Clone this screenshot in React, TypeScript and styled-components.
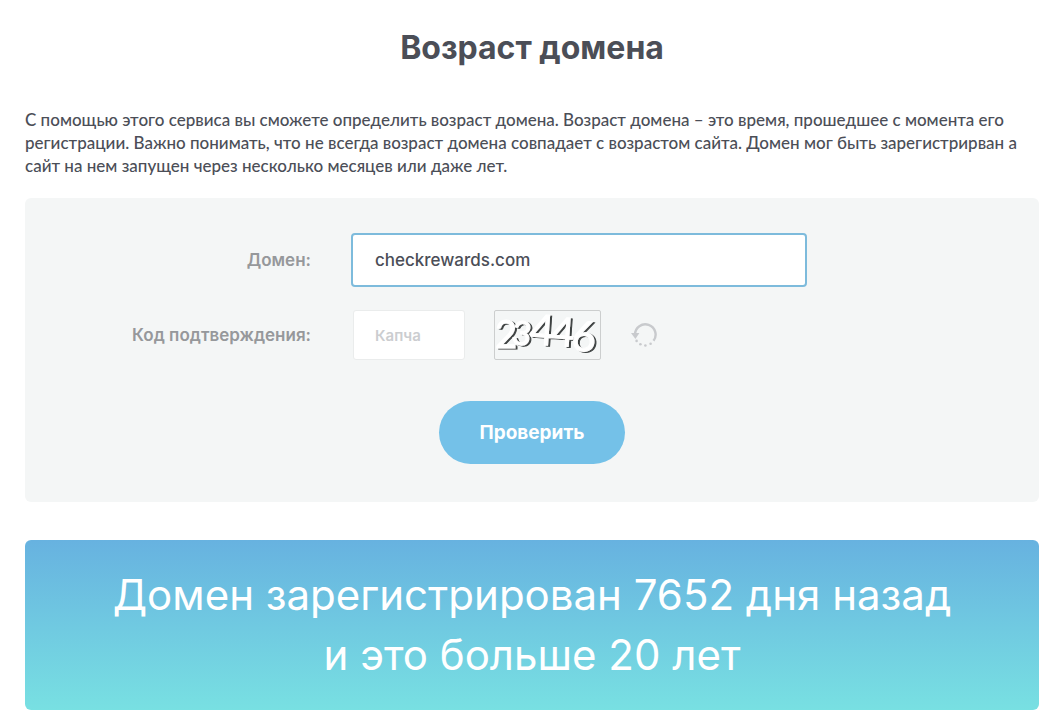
import React, { useState } from "react";
import styled, { createGlobalStyle } from "styled-components";

const Global = createGlobalStyle`
  *, *::before, *::after { box-sizing: border-box; }
  body {
    margin: 0;
    background: #fff;
    color: #4b4e57;
    font-family: Inter, "Open Sans", sans-serif;
  }
`;

const Page = styled.main`
  padding: 24px 24px 14px 25px;
`;

const Title = styled.h1`
  margin: 0 0 36px;
  text-align: center;
  font-size: 32px;
  line-height: 48px;
  font-weight: 700;
`;

const Intro = styled.p`
  margin: 0 0 21px;
  font-family: Lato, sans-serif;
  font-size: 17px;
  line-height: 23px;
  font-weight: 500;
`;

const Form = styled.form`
  display: flex;
  flex-direction: column;
  padding: 35px 0 38px;
  border-radius: 6px;
  background: #f4f6f6;
`;

const Row = styled.div`
  display: grid;
  grid-template-columns: 286px minmax(0, 456px);
  column-gap: 40px;
  align-items: center;

  & + & {
    margin-top: 23px;
  }
`;

const Label = styled.label`
  text-align: right;
  font-size: 17px;
  line-height: 24px;
  font-weight: 600;
  color: #96989b;
`;

const DomainInput = styled.input`
  width: 100%;
  height: 54px;
  padding: 0 22px;
  border: 2px solid #7dbbdc;
  border-radius: 4px;
  outline: 0;
  background: #fff;
  color: #4b4e57;
  font: 500 17px Inter, sans-serif;
`;

const CaptchaGroup = styled.div`
  display: flex;
  align-items: center;
  padding-left: 2px;
`;

const CodeInput = styled.input`
  width: 112px;
  height: 50px;
  padding: 0 21px;
  border: 1px solid #eaecec;
  border-radius: 3px;
  background: #fff;
  color: #4b4e57;
  font: 600 15px Inter, sans-serif;

  &::placeholder {
    color: #cbcdd0;
    opacity: 1;
  }
`;

const CaptchaPicture = styled.svg`
  width: 107px;
  height: 50px;
  margin: 0 30px 0 29px;
  border: 1px solid #cccece;
  border-radius: 2px;
  overflow: visible;
  font-family: Lato, sans-serif;
  font-weight: 400;
  text-anchor: middle;
`;

const RefreshButton = styled.button`
  display: flex;
  padding: 0;
  border: 0;
  background: none;
  color: #c8cacd;
  cursor: pointer;
`;

const SubmitButton = styled.button`
  align-self: center;
  width: 186px;
  height: 63px;
  margin-top: 41px;
  border: 0;
  border-radius: 32px;
  background: #74c1e8;
  color: #fff;
  font: 700 19px Inter, sans-serif;
  cursor: pointer;
`;

const Result = styled.section`
  margin-top: 38px;
  padding: 25px 0;
  border-radius: 6px;
  background: linear-gradient(#67b2e0, #78e0e2);
  color: #fff;
  text-align: center;
  font-size: 42px;
  line-height: 60px;
`;

const digits = [
  { char: "2", x: 11, y: 37, size: 38, turn: 0 },
  { char: "3", x: 27, y: 34, size: 33, turn: 8 },
  { char: "4", x: 47, y: 34, size: 42, turn: 4 },
  { char: "4", x: 68, y: 35, size: 40, turn: 4 },
  { char: "6", x: 89, y: 40, size: 42, turn: 6 },
];

/* Embossed digits: a dark edge to the lower right of a white stroke. */
function Captcha() {
  return (
    <CaptchaPicture viewBox="0 0 105 48" role="img" aria-label="Капча">
      <defs>
        <filter id="emboss" x="-20%" y="-20%" width="140%" height="140%">
          <feDropShadow dx="2" dy="1" stdDeviation="0.6" floodColor="#2c2e2e" floodOpacity="0.9" />
        </filter>
      </defs>
      <g fill="#fff" stroke="#fff" strokeWidth="1" filter="url(#emboss)">
        {digits.map((d) => (
          <text key={d.x} x={d.x} y={d.y} fontSize={d.size} transform={`rotate(${d.turn} ${d.x} ${d.y - 12})`}>
            {d.char}
          </text>
        ))}
      </g>
    </CaptchaPicture>
  );
}

function RefreshIcon() {
  return (
    <svg width="26" height="26" viewBox="0 0 26 26" fill="none" stroke="currentColor" aria-hidden="true">
      <path d="M4 12.5a10.3 10.3 0 1 1 18.5 6.3" strokeWidth="2.4" />
      <g fill="currentColor" stroke="none">
        <circle cx="19.6" cy="21.7" r="1.3" />
        <circle cx="14.4" cy="23.5" r="1.3" />
        <circle cx="9.4" cy="22.2" r="1.3" />
        <circle cx="5.6" cy="18.9" r="1.3" />
        <path d="M0 11h8.4l-4 6z" />
      </g>
    </svg>
  );
}

export default function App() {
  const [domain, setDomain] = useState("checkrewards.com");
  const [code, setCode] = useState("");

  return (
    <Page>
      <Global />
      <Title>Возраст домена</Title>
      <Intro>
        С помощью этого сервиса вы сможете определить возраст домена. Возраст домена – это время,
        прошедшее с момента его регистрации. Важно понимать, что не всегда возраст домена совпадает
        с возрастом сайта. Домен мог быть зарегистрирван а сайт на нем запущен через несколько
        месяцев или даже лет.
      </Intro>
      <Form onSubmit={(e) => e.preventDefault()}>
        <Row>
          <Label htmlFor="domain">Домен:</Label>
          <DomainInput id="domain" value={domain} onChange={(e) => setDomain(e.target.value)} />
        </Row>
        <Row>
          <Label htmlFor="code">Код подтверждения:</Label>
          <CaptchaGroup>
            <CodeInput id="code" placeholder="Капча" value={code} onChange={(e) => setCode(e.target.value)} />
            <Captcha />
            <RefreshButton type="button" aria-label="Обновить">
              <RefreshIcon />
            </RefreshButton>
          </CaptchaGroup>
        </Row>
        <SubmitButton type="submit">Проверить</SubmitButton>
      </Form>
      <Result>
        Домен зарегистрирован 7652 дня назад
        <br />и это больше 20 лет
      </Result>
    </Page>
  );
}
